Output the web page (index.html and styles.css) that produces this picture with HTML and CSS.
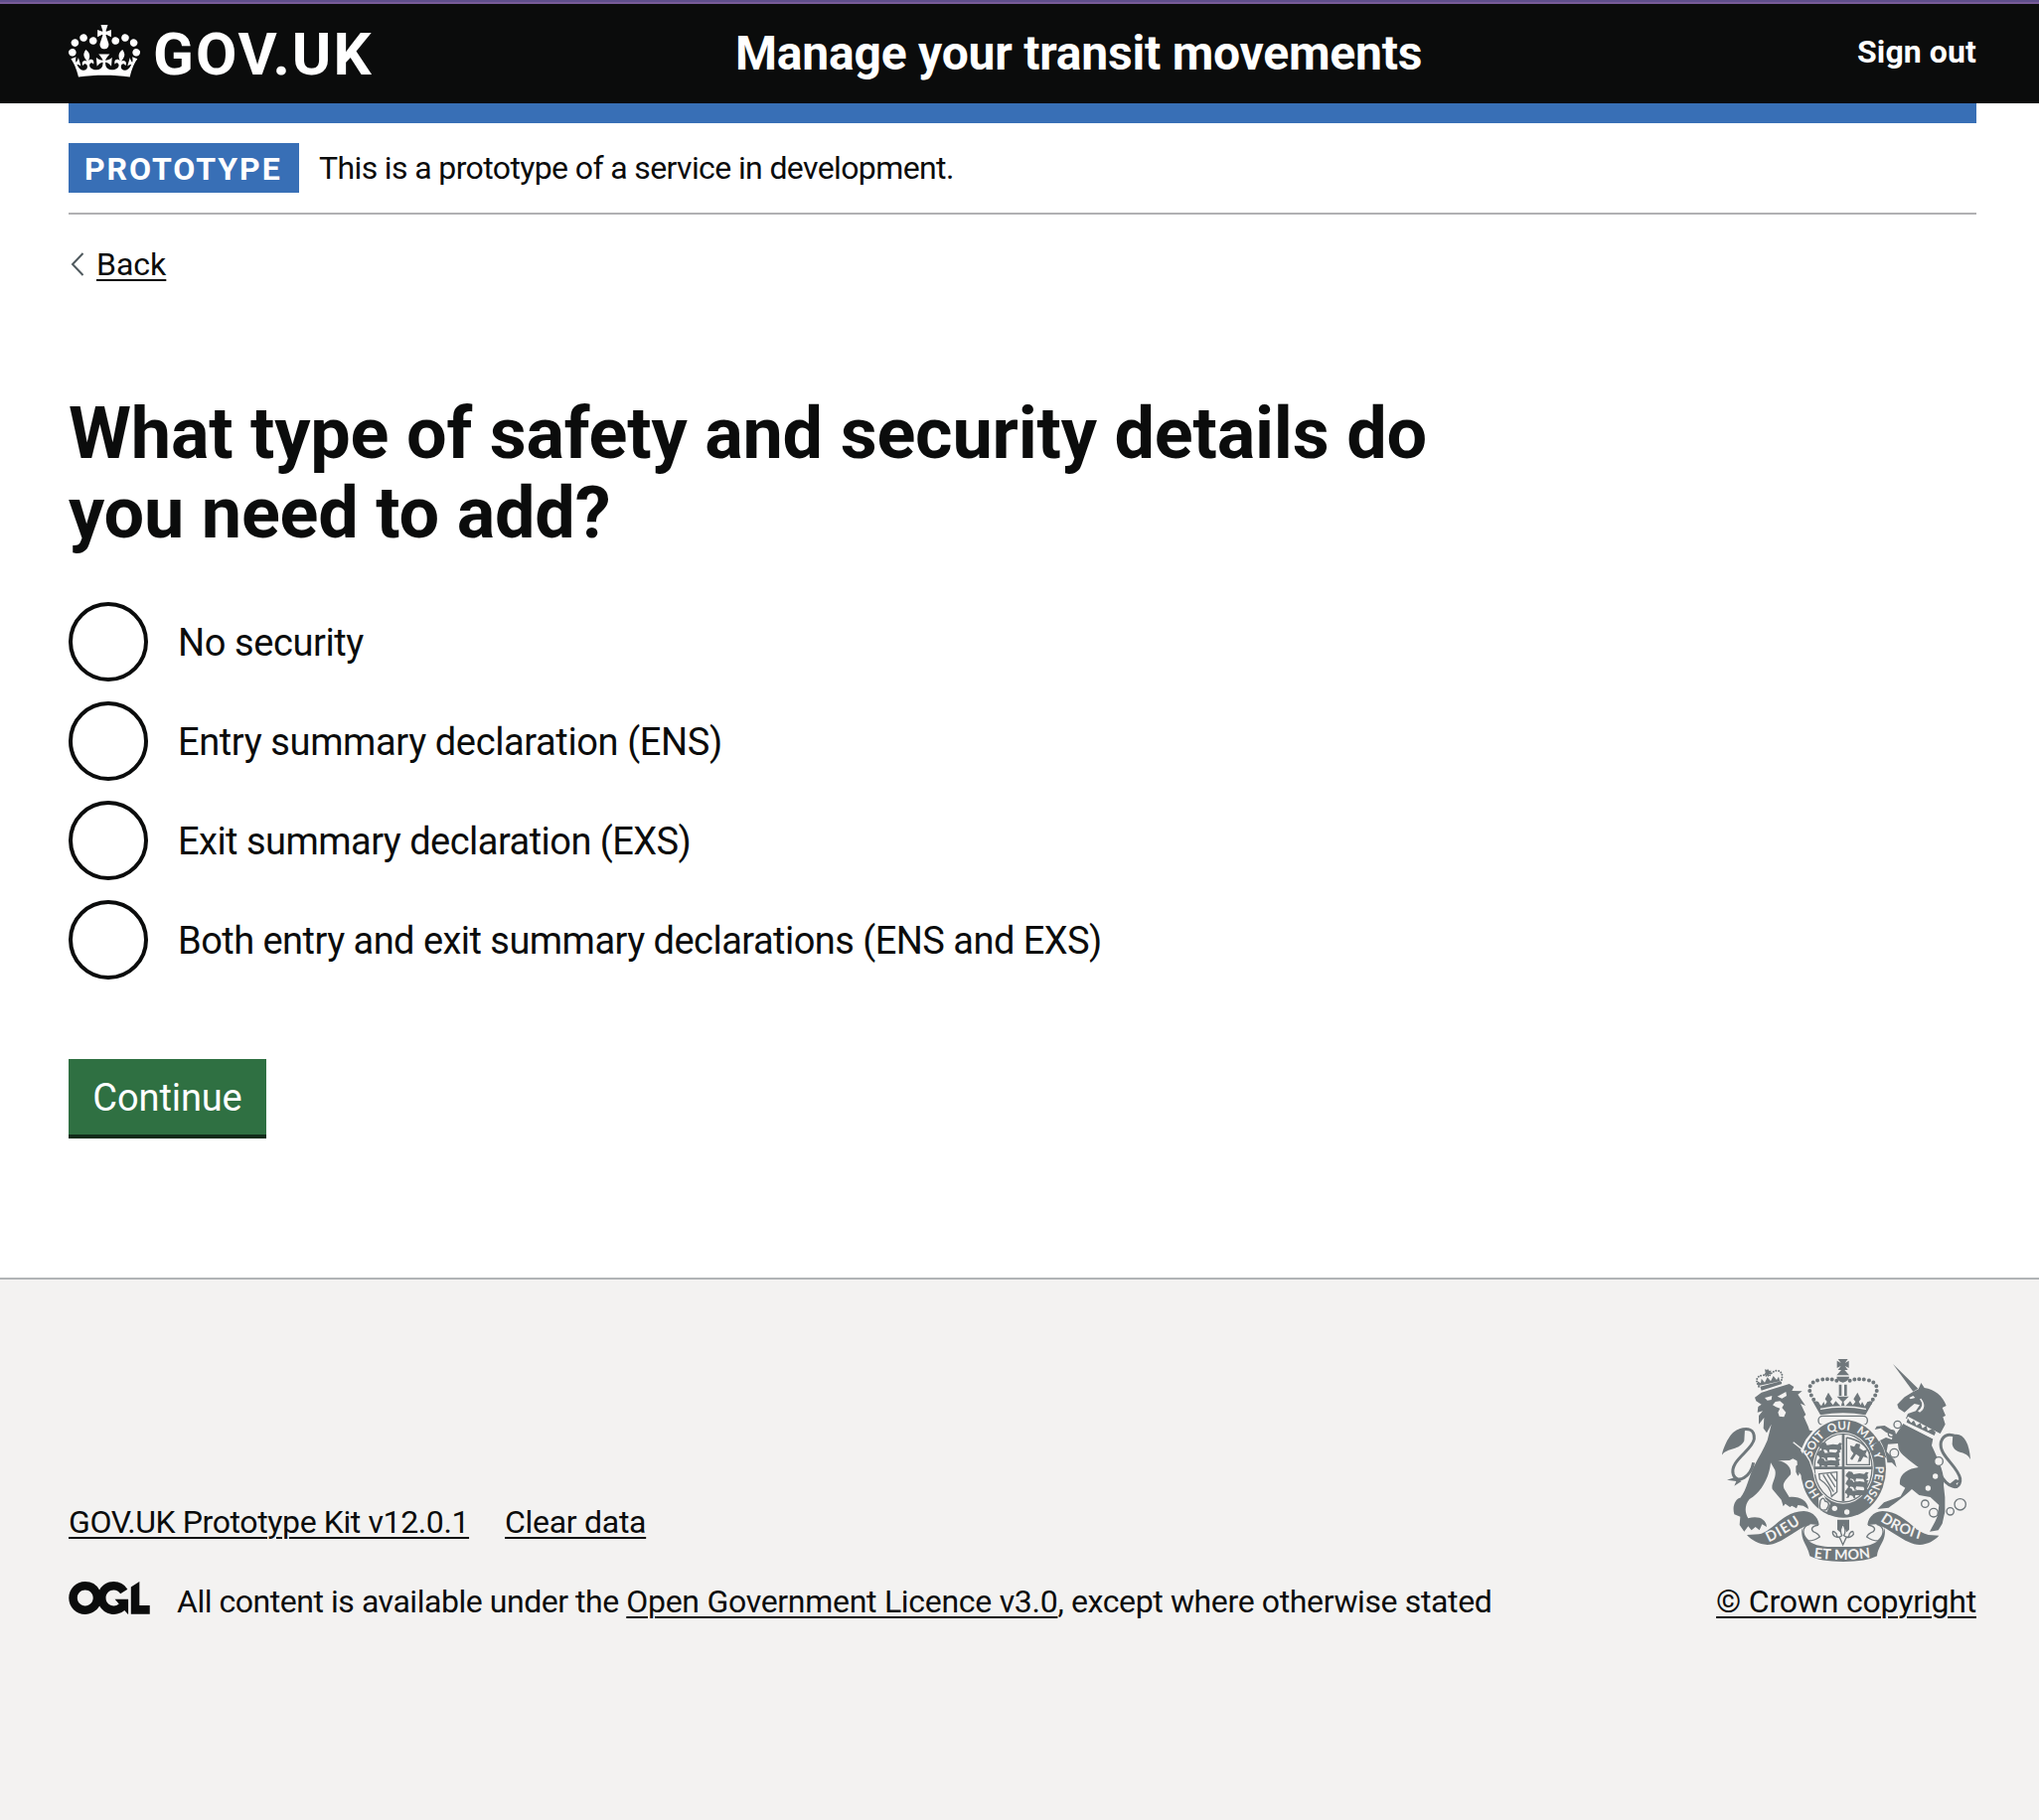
FILE: index.html
```html
<!DOCTYPE html>
<html lang="en">
<head>
<meta charset="utf-8">
<title>What type of safety and security details do you need to add?</title>
<link rel="stylesheet" href="styles.css">
</head>
<body>
<header class="header">
  <div class="container header-row">
    <a class="logo" href="#">
      <svg class="logo-crown" viewBox="0 0 132 97" aria-hidden="true"><path fill="currentColor" fill-rule="evenodd" d="M25 30.2c3.5 1.5 7.7-.2 9.1-3.7 1.5-3.6-.2-7.8-3.9-9.2-3.6-1.4-7.6.3-9.1 3.9-1.4 3.5.3 7.5 3.9 9zM9 39.5c3.6 1.5 7.8-.2 9.2-3.7 1.5-3.6-.2-7.8-3.9-9.1-3.6-1.5-7.6.2-9.1 3.8-1.4 3.5.3 7.5 3.8 9zM4.4 57.2c3.5 1.5 7.7-.2 9.1-3.8 1.5-3.6-.2-7.7-3.9-9.1-3.5-1.5-7.6.3-9.1 3.8-1.4 3.5.3 7.6 3.9 9.1zm38.3-21.4c3.5 1.5 7.7-.2 9.1-3.8 1.5-3.6-.2-7.7-3.9-9.1-3.6-1.5-7.6.3-9.1 3.8-1.3 3.6.4 7.7 3.9 9.1zm64.4-5.6c-3.6 1.5-7.8-.2-9.1-3.7-1.5-3.6.2-7.8 3.8-9.2 3.6-1.4 7.7.3 9.2 3.9 1.3 3.5-.4 7.5-3.9 9zm15.9 9.3c-3.6 1.5-7.7-.2-9.1-3.7-1.5-3.6.2-7.8 3.7-9.1 3.6-1.5 7.7.2 9.2 3.8 1.5 3.5-.3 7.5-3.8 9zm4.7 17.7c-3.6 1.5-7.8-.2-9.2-3.8-1.5-3.6.2-7.7 3.9-9.1 3.6-1.5 7.7.3 9.2 3.8 1.3 3.5-.4 7.6-3.9 9.1zM89.3 35.8c-3.6 1.5-7.8-.2-9.2-3.8-1.4-3.6.2-7.7 3.9-9.1 3.6-1.5 7.7.3 9.2 3.8 1.4 3.6-.3 7.7-3.9 9.1zM69.7 17.7l8.9 4.7V9.3l-8.9 2.8c-.2-.3-.5-.6-.9-.9L72.4 0H59.6l3.5 11.2c-.3.3-.6.5-.9.9l-8.8-2.8v13.1l8.8-4.7c.3.3.6.7.9.9l-5 15.4v.1c-.2.8-.4 1.6-.4 2.4 0 4.1 3.1 7.5 7 8.1h.2c.3 0 .7.1 1 .1.4 0 .7 0 1-.1h.2c4-.6 7.1-4.1 7.1-8.1 0-.8-.1-1.7-.4-2.4V34l-5.1-15.4c.4-.2.7-.6 1-.9zM66 92.8c16.9 0 32.8 1.1 47.1 3.2 4-16.9 8.9-26.7 14-33.5l-9.6-3.4c1 4.9 1.1 7.2 0 10.2-1.5-1.4-3-4.3-4.2-8.7L108.6 76c2.8-2 5-3.2 7.5-3.3-4.4 9.4-10 11.9-13.6 11.2-4.3-.8-6.3-4.6-5.6-7.9 1-4.7 5.7-5.9 8-.5 4.3-8.7-3-11.4-7.6-8.8 7.1-7.2 7.9-13.5 2.1-21.1-8 6.1-8.1 12.3-4.5 20.8-4.7-5.4-12.1-2.5-9.5 6.2 3.4-5.2 7.9-2 7.2 3.1-.6 4.3-6.4 7.8-13.5 7.2-10.3-.9-10.9-8-11.2-13.8 2.5-.5 7.1 1.8 11 7.3L80.2 60c-4.1 4.4-8 5.3-12.3 5.4 1.4-4.4 8-11.6 8-11.6H55.5s6.4 7.2 7.9 11.6c-4.2-.1-8-1-12.3-5.4l1.4 16.4c3.9-5.5 8.5-7.7 10.9-7.3-.3 5.8-.9 12.8-11.1 13.8-7.2.6-12.9-2.9-13.5-7.2-.7-5 3.8-8.3 7.1-3.1 2.7-8.7-4.6-11.6-9.4-6.2 3.7-8.5 3.6-14.7-4.6-20.8-5.8 7.6-5 13.9 2.2 21.1-4.7-2.6-11.9.1-7.7 8.8 2.3-5.5 7.1-4.2 8.1.5.7 3.3-1.3 7.1-5.7 7.9-3.5.7-9-1.8-13.5-11.2 2.5.1 4.7 1.3 7.5 3.3l-4.7-15.4c-1.2 4.4-2.7 7.2-4.3 8.7-1.1-3-.9-5.3 0-10.2l-9.5 3.4c5 6.9 9.9 16.7 14 33.5 14.8-2.1 30.8-3.2 47.7-3.2z"/></svg>
      <span class="logo-text">GOV.UK</span>
    </a>
    <a class="service-name" href="#">Manage your transit movements</a>
    <a class="sign-out" href="#">Sign out</a>
  </div>
</header>

<div class="container">
  <div class="blue-bar"></div>
  <div class="phase-banner">
    <strong class="tag">PROTOTYPE</strong>
    <span class="phase-text">This is a prototype of a service in development.</span>
  </div>
  <div class="back">
    <svg class="back-arrow" viewBox="0 0 14 24" aria-hidden="true"><path d="M12.500 1 2 12l10.500 11"/></svg>
    <a class="link back-link" href="#">Back</a>
  </div>

  <main class="main">
    <h1 class="heading">What type of safety and security details do<br>you need to add?</h1>
    <div class="radios">
      <div class="radio"><span class="radio-circle"></span><span class="radio-label short">No security</span></div>
      <div class="radio"><span class="radio-circle"></span><span class="radio-label entry">Entry summary declaration (ENS)</span></div>
      <div class="radio"><span class="radio-circle"></span><span class="radio-label">Exit summary declaration (EXS)</span></div>
      <div class="radio"><span class="radio-circle"></span><span class="radio-label">Both entry and exit summary declarations (ENS and EXS)</span></div>
    </div>
    <button class="button" type="button">Continue</button>
  </main>
</div>

<footer class="footer">
  <div class="container footer-row">
    <div class="footer-meta">
      <div class="footer-links">
        <a class="link kit" href="#">GOV.UK Prototype Kit v12.0.1</a>
        <a class="link clear" href="#">Clear data</a>
      </div>
      <div class="licence">
        <svg class="ogl" viewBox="0 0 483.2 195.7" aria-hidden="true"><path fill="currentColor" d="M421.5 142.8V.1l-50.7 32.3v161.1h112.4v-50.7zm-122.3-9.6A47.12 47.12 0 0 1 221 97.8c0-26 21.1-47.1 47.1-47.1 16.7 0 31.4 8.7 39.7 21.8l42.7-27.2A97.63 97.63 0 0 0 268.1 0c-36.5 0-68.3 20.1-85.1 49.7A98 98 0 0 0 97.8 0C43.9 0 0 43.9 0 97.8s43.9 97.8 97.8 97.8c36.5 0 68.3-20.1 85.1-49.7a97.76 97.76 0 0 0 149.6 25.4l19.4 22.2h3v-87.8h-80l24.3 27.5zM97.8 145c-26 0-47.1-21.1-47.1-47.1s21.1-47.1 47.1-47.1 47.1 21.1 47.1 47.1S123.8 145 97.8 145"/></svg>
        <span class="licence-text">All content is available under the <a class="link ogl-link" href="#">Open Government Licence v3.0</a><span class="licence-end">, except where otherwise stated</span></span>
      </div>
    </div>
    <div class="copyright">
      <svg class="crest" viewBox="39 39 750 612" aria-hidden="true">
        <defs>
          <path id="honi" d="M335 449A98 115 0 0 1 308 380"/>
          <path id="soit" d="M309 337A98 115 0 0 1 362 264"/>
          <path id="qui" d="M362 264A98 115 0 0 1 445 262"/>
          <path id="mal" d="M443 261A98 115 0 0 1 503 360"/>
          <path id="pense" d="M502 362A98 115 0 0 1 440 478"/>
          <path id="dieu" d="M180 592Q225 572 290 526"/>
          <path id="droit" d="M516 528Q575 570 670 592"/>
          <path id="mon" d="M316 639Q405 652 500 637"/>
          <g id="guardant">
            <path class="ink" d="M0 8l8-8 10 2 4 7 18-3 14 2 6-6 8 2-4 5 2 12-6 4 3 5h-8l-3-7-22-1-2 7 6 3h-9l-4-8-8-2-4 8H1l5-6-2-6-6-3z"/>
          </g>
        </defs>
        <!-- lion -->
        <path class="ink" d="M138 155L158 140 242 114 256 123 250 135 281 136 268 146 291 180 276 173 292 207 286 213 299 242 303 254 313 256 292 282 276 316 290 330 308 360 314 390 306 388 297 398 292 380 284 394 278 380 268 392 262 380 262 362 276 352 253 340 243 345 208 346C235 350 250 368 246 388C232 404 220 414 226 430L242 456C268 452 298 464 300 492L284 482 268 480 264 490 250 482 244 486 230 476 224 484 218 464 191 432C186 415 205 398 199 374L186 352C182 394 160 440 122 462C106 480 108 504 118 520C146 512 172 520 174 546L160 538 152 556 140 546 128 556 118 544 106 560 92 540 94 515 76 508C68 480 82 460 94 458C116 430 118 396 136 362C150 335 165 310 176 284L188 236 174 262 164 248 166 216 150 236 150 210 162 196 146 200 148 183 158 176 142 166z"/>
        <path class="line tail" d="M134 352C126 394 86 420 73 388C60 346 132 314 136 280C138 250 116 246 92 254"/>
        <path class="ink" d="M108 252C76 240 50 284 38 330C54 306 92 316 106 286zM78 396L54 404 82 408 76 422 98 408z"/>
        <path class="paper" d="M168 156L190 150 188 162 176 164zM206 152L232 138 234 150 220 158zM192 178L200 168 214 166 226 176 220 186 232 200 226 214 212 212 208 200 214 188 202 184z"/>
        <path class="ink" d="M154 122L216 106 220 114 158 134zM148 120L146 106 156 112 158 98 168 110 176 94 186 106 194 90 204 102 210 92 214 106z"/>
        <path class="beads small" d="M150 122Q134 94 160 88Q172 86 176 94M216 110Q228 80 208 74Q190 74 182 90"/>
        <path class="ink" d="M168 70l7 2 2-4 4 6 8 0-4 5 4 6-8-1-2 10-6-8-8 2 5-8z"/>
        <!-- unicorn -->
        <path class="ink" d="M555 54L631 128 616 137zM632 130L640 111 650 126C680 130 706 150 716 180L704 186 714 210 706 214 713 236 698 264 594 218 600 204 624 196 636 178 620 174 608 184 590 200 572 188 568 176 590 154 612 140z"/>
        <path class="ink" d="M586 234L676 280 672 300C690 340 712 380 708 420L712 456 712 500 704 536 692 556 666 560 682 530 690 512 694 480 668 456 634 450 612 432C592 452 562 474 542 488L508 492 528 472 578 454 592 428 576 418C572 386 600 370 632 366C606 346 576 326 572 310L570 294 540 296 536 318 560 344 566 366 552 352 536 352 530 334 518 314 514 286 534 276 552 282 554 268 534 260 518 248 500 252 506 242 530 240 556 256 564 266z"/>
        <path class="paper" d="M604 156L616 150 622 156 608 160zM640 158Q660 184 636 200L630 196Q652 180 636 160z"/>
        <path class="paper" d="M600 212L692 262 684 284 590 236z"/>
        <path class="ink" d="M600 218l10 14 8-8 8 16 12-8 6 16 12-8 4 16 14-6 10 10-4 10-84-40z"/>
        <path class="line tail" d="M696 384C720 430 760 440 758 400C750 360 692 330 700 290C708 262 730 266 746 272"/>
        <path class="ink" d="M736 268C766 258 786 290 789 342C776 312 742 330 734 296zM744 402L764 408 746 414 750 430 724 418z"/>
        <g class="ring"><circle cx="569" cy="237" r="11"/><circle cx="551" cy="264" r="10"/><circle cx="559" cy="323" r="13"/><circle class="paper" cx="693" cy="348" r="13"/><circle cx="652" cy="476" r="11"/><circle cx="678" cy="503" r="13"/><circle cx="728" cy="499" r="11"/><circle cx="758" cy="478" r="17"/></g>
        <g class="paper"><circle cx="683" cy="393" r="8"/><circle cx="661" cy="429" r="8"/></g>
        <!-- royal crown -->
        <path class="ink" d="M389 39h30l-9 12 12-7v22l-12-6 9 12h-30l9-12-12 6V44l12 7zM399 72h10l14 16h-38zM385 92h38q0 12-19 18q-19-6-19-18zM392 116h8v34h-8zM408 116h8v34h-8z"/>
        <path class="beads" d="M334 184Q276 120 328 103Q370 94 392 108M476 184Q534 120 482 103Q440 94 418 108"/>
        <path class="ink" d="M312 166l18 2 8 14 8-14 4 10 6-10-6-8 10-20 12 20-6 8 8 10 8-12 16 16 4-14-16-16h36l-16 16 4 14 16-16 8 12 8-10-6-8 12-20 10 20-6 8 6 10 4-10 8 14 8-14 18-2-24 42Q405 196 336 208z"/>
        <path class="gap" d="M336 190Q405 176 474 190"/>
        <rect class="ring" x="330" y="211" width="148" height="27" rx="13"/>
        <!-- garter and shield -->
        <ellipse class="paper" cx="405" cy="370" rx="134" ry="152"/>
        <ellipse class="ink" cx="405" cy="370" rx="129" ry="148"/>
        <ellipse class="paper" cx="405" cy="368" rx="92" ry="108"/>
        <ellipse class="line" cx="405" cy="368" rx="87" ry="103"/>
        <path class="line bar" d="M405 264V468M317 368H493"/>
        <g><use href="#guardant" x="334" y="290"/><use href="#guardant" x="328" y="314"/><use href="#guardant" x="328" y="338"/><use href="#guardant" x="414" y="378"/><use href="#guardant" x="414" y="402"/><use href="#guardant" x="412" y="428"/></g>
        <path class="line" d="M415 276V358H484V322Q468 286 415 276"/>
        <path class="ink" d="M426 300l12 4 6-10 12 2-2 12 12 8 12-4-6 14 8 12-14-4-8 14-10 2 6-16-10-8-12 18-6-4 10-16-8-10z"/>
        <path class="line" d="M332 386L386 380V440L370 454Q368 424 334 402zM344 388L376 440M356 386L381 426M367 384L384 408"/>
        <path class="paper" d="M330 458L346 448 352 462 366 474 356 500 332 494z"/>
        <path class="line" d="M336 466Q346 452 350 468Q370 472 354 494Q334 500 334 482z"/>
        <g class="paper"><circle cx="379" cy="490" r="8"/><circle cx="416" cy="501" r="8"/></g>
        <g class="motto garter">
          <text><textPath href="#honi">HO</textPath></text>
          <text><textPath href="#soit">SOIT</textPath></text>
          <text><textPath href="#qui">QUI</textPath></text>
          <text><textPath href="#mal">MAL Y</textPath></text>
          <text><textPath href="#pense">PENSE</textPath></text>
        </g>
        <path class="ink" d="M262 300L284 326 300 350 314 384 306 384 300 398 290 380 282 394 268 378z"/>
        <path class="gap" d="M254 290L284 314 304 346 318 388"/>
        <path class="ink" d="M496 298L514 286 526 308 536 340 516 322z"/>
        <!-- scroll -->
        <path class="ink" d="M387 524h36v30l-8 8-10-26-10 26-8-8z"/>
        <path class="line" d="M404 538Q392 554 401 572Q386 584 384 566Q370 552 374 568Q378 578 394 578L404 600 414 578Q430 578 436 568Q436 552 424 566Q422 584 407 572Q416 554 404 538z"/>
        <path class="ink" d="M114 570L150 568C196 558 220 500 286 498C314 500 330 518 332 540L306 538C270 546 220 600 176 600C150 598 128 586 114 570zM694 572L662 570C616 560 590 500 524 498C496 500 480 518 478 540L504 538C540 546 592 600 636 600C660 598 680 588 694 572z"/>
        <path class="ink" d="M280 548C290 610 350 606 405 606C460 606 520 610 530 548C536 590 510 600 507 634Q475 651 405 651Q335 651 304 634C298 600 276 590 280 548z"/>
        <path class="line" d="M304 538C276 546 282 572 300 588Q318 588 334 576Q330 566 314 560Q302 546 330 540M506 538C534 546 528 572 510 588Q492 588 476 576Q480 566 496 560Q508 546 480 540"/>
        <text class="motto"><textPath href="#dieu" textLength="112">DIEU</textPath></text>
        <text class="motto"><textPath href="#mon" textLength="172">ET MON</textPath></text>
        <text class="motto"><textPath href="#droit" textLength="138">DROIT</textPath></text>
      </svg>
      <a class="link copyright-link" href="#">© Crown copyright</a>
    </div>
  </div>
</footer>
</body>
</html>
```
FILE: styles.css
```css
* { box-sizing: border-box; }
body {
  margin: 0;
  min-height: 1832px;
  display: flex;
  flex-direction: column;
  background: #fff;
  color: #0b0c0c;
  font-family: Roboto, "Liberation Sans", sans-serif;
  font-size: 32px;
  line-height: 40px;
}
.container { width: 1920px; margin-left: 69px; }
a { color: inherit; text-decoration: none; white-space: nowrap; }
.link {
  text-decoration: underline;
  text-decoration-thickness: 2px;
  text-underline-offset: 4px;
}

/* Header */
.header {
  height: 104px;
  background: #0b0c0c;
  border-top: 2px solid #5f4f8b;
  color: #fff;
}
.header-row {
  height: 102px;
  display: grid;
  grid-template-columns: 671px 1fr auto;
  align-items: start;
  font-weight: 700;
}
.header::before {
  content: "";
  display: block;
  height: 2px;
  margin-bottom: -2px;
  background: #785b98;
}
.logo { display: flex; padding-top: 23px; gap: 13px; }
.logo-crown { width: 72px; height: 53px; }
.logo-text { font-size: 60px; line-height: 50px; padding-top: 5px; letter-spacing: 2px; }
.service-name { font-size: 48px; line-height: 50px; padding-top: 27px; letter-spacing: -0.22px; }
.sign-out { padding-top: 30px; letter-spacing: 0.1px; }

/* Phase banner */
.blue-bar { height: 20px; background: #386fb6; }
.phase-banner {
  height: 92px;
  padding-top: 20px;
  display: flex;
  gap: 20px;
  border-bottom: 2px solid #b1b1b3;
}
.tag {
  width: 232px;
  height: 50px;
  padding: 2px 0 0 16px;
  background: #386fb6;
  color: #fff;
  line-height: 48px;
  letter-spacing: 1.95px;
}
.phase-text { line-height: 50px; letter-spacing: -0.62px; }
.back { display: flex; padding: 30px 0 0 2px; gap: 12px; }
.back-arrow { width: 14px; height: 24px; margin-top: 8px; fill: none; stroke: #505a5f; stroke-width: 2; }

/* Question */
.main { padding-top: 111px; }
.heading { margin: 0 0 49px; font-size: 72px; line-height: 80px; font-weight: 700; letter-spacing: -0.2px; }
.radios { display: flex; flex-direction: column; gap: 20px; }
.radio { display: flex; gap: 30px; }
.radio-circle { width: 80px; height: 80px; border: 4px solid #0b0c0c; border-radius: 50%; }
.radio-label { padding-top: 2px; font-size: 38px; line-height: 78px; letter-spacing: -0.53px; }
.entry { letter-spacing: -0.38px; }
.short { letter-spacing: -0.4px; }
.button {
  display: block;
  width: 199px;
  height: 80px;
  margin-top: 80px;
  padding: 2px 0 0;
  border: 0;
  border-bottom: 4px solid #102b19;
  background: #2f7042;
  color: #fff;
  font: 400 38px/74px Roboto, sans-serif;
  letter-spacing: -0.1px;
}

/* Footer */
.footer {
  flex: 1;
  margin-top: 140px;
  border-top: 2px solid #b1b4b6;
  background: #f3f2f1;
}
.footer-row { display: flex; justify-content: space-between; align-items: flex-end; height: 344px; }
.footer-links { display: flex; gap: 36px; }
.kit { letter-spacing: -0.39px; }
.clear { letter-spacing: -0.3px; }
.licence { display: flex; gap: 27px; padding-top: 40px; white-space: nowrap; }
.ogl { width: 82px; height: 33px; }
.licence-text { letter-spacing: -0.46px; }
.ogl-link { letter-spacing: -0.29px; }
.licence-end { letter-spacing: -0.37px; }
.copyright { display: flex; flex-direction: column; align-items: flex-end; gap: 20px; }
.copyright-link { letter-spacing: -0.18px; }

/* Coat of arms */
.crest { width: 250px; height: 204px; margin-right: 6px; }
.ink { fill: #6f777b; }
.line, .ring { fill: none; stroke: #6f777b; stroke-width: 4; }
.paper { fill: #f3f2f1; }
.tail { stroke-width: 9; }
.bar { stroke-width: 8; }
.gap { fill: none; stroke: #f3f2f1; stroke-width: 4; }
.beads { fill: none; stroke: #6f777b; stroke-width: 12; stroke-linecap: round; stroke-dasharray: 0 14.5; }
.small { stroke-width: 6; stroke-dasharray: 0 8; }
.motto { fill: #f3f2f1; font: 700 43px Lato, sans-serif; }
.garter { font-size: 35px; }
```
